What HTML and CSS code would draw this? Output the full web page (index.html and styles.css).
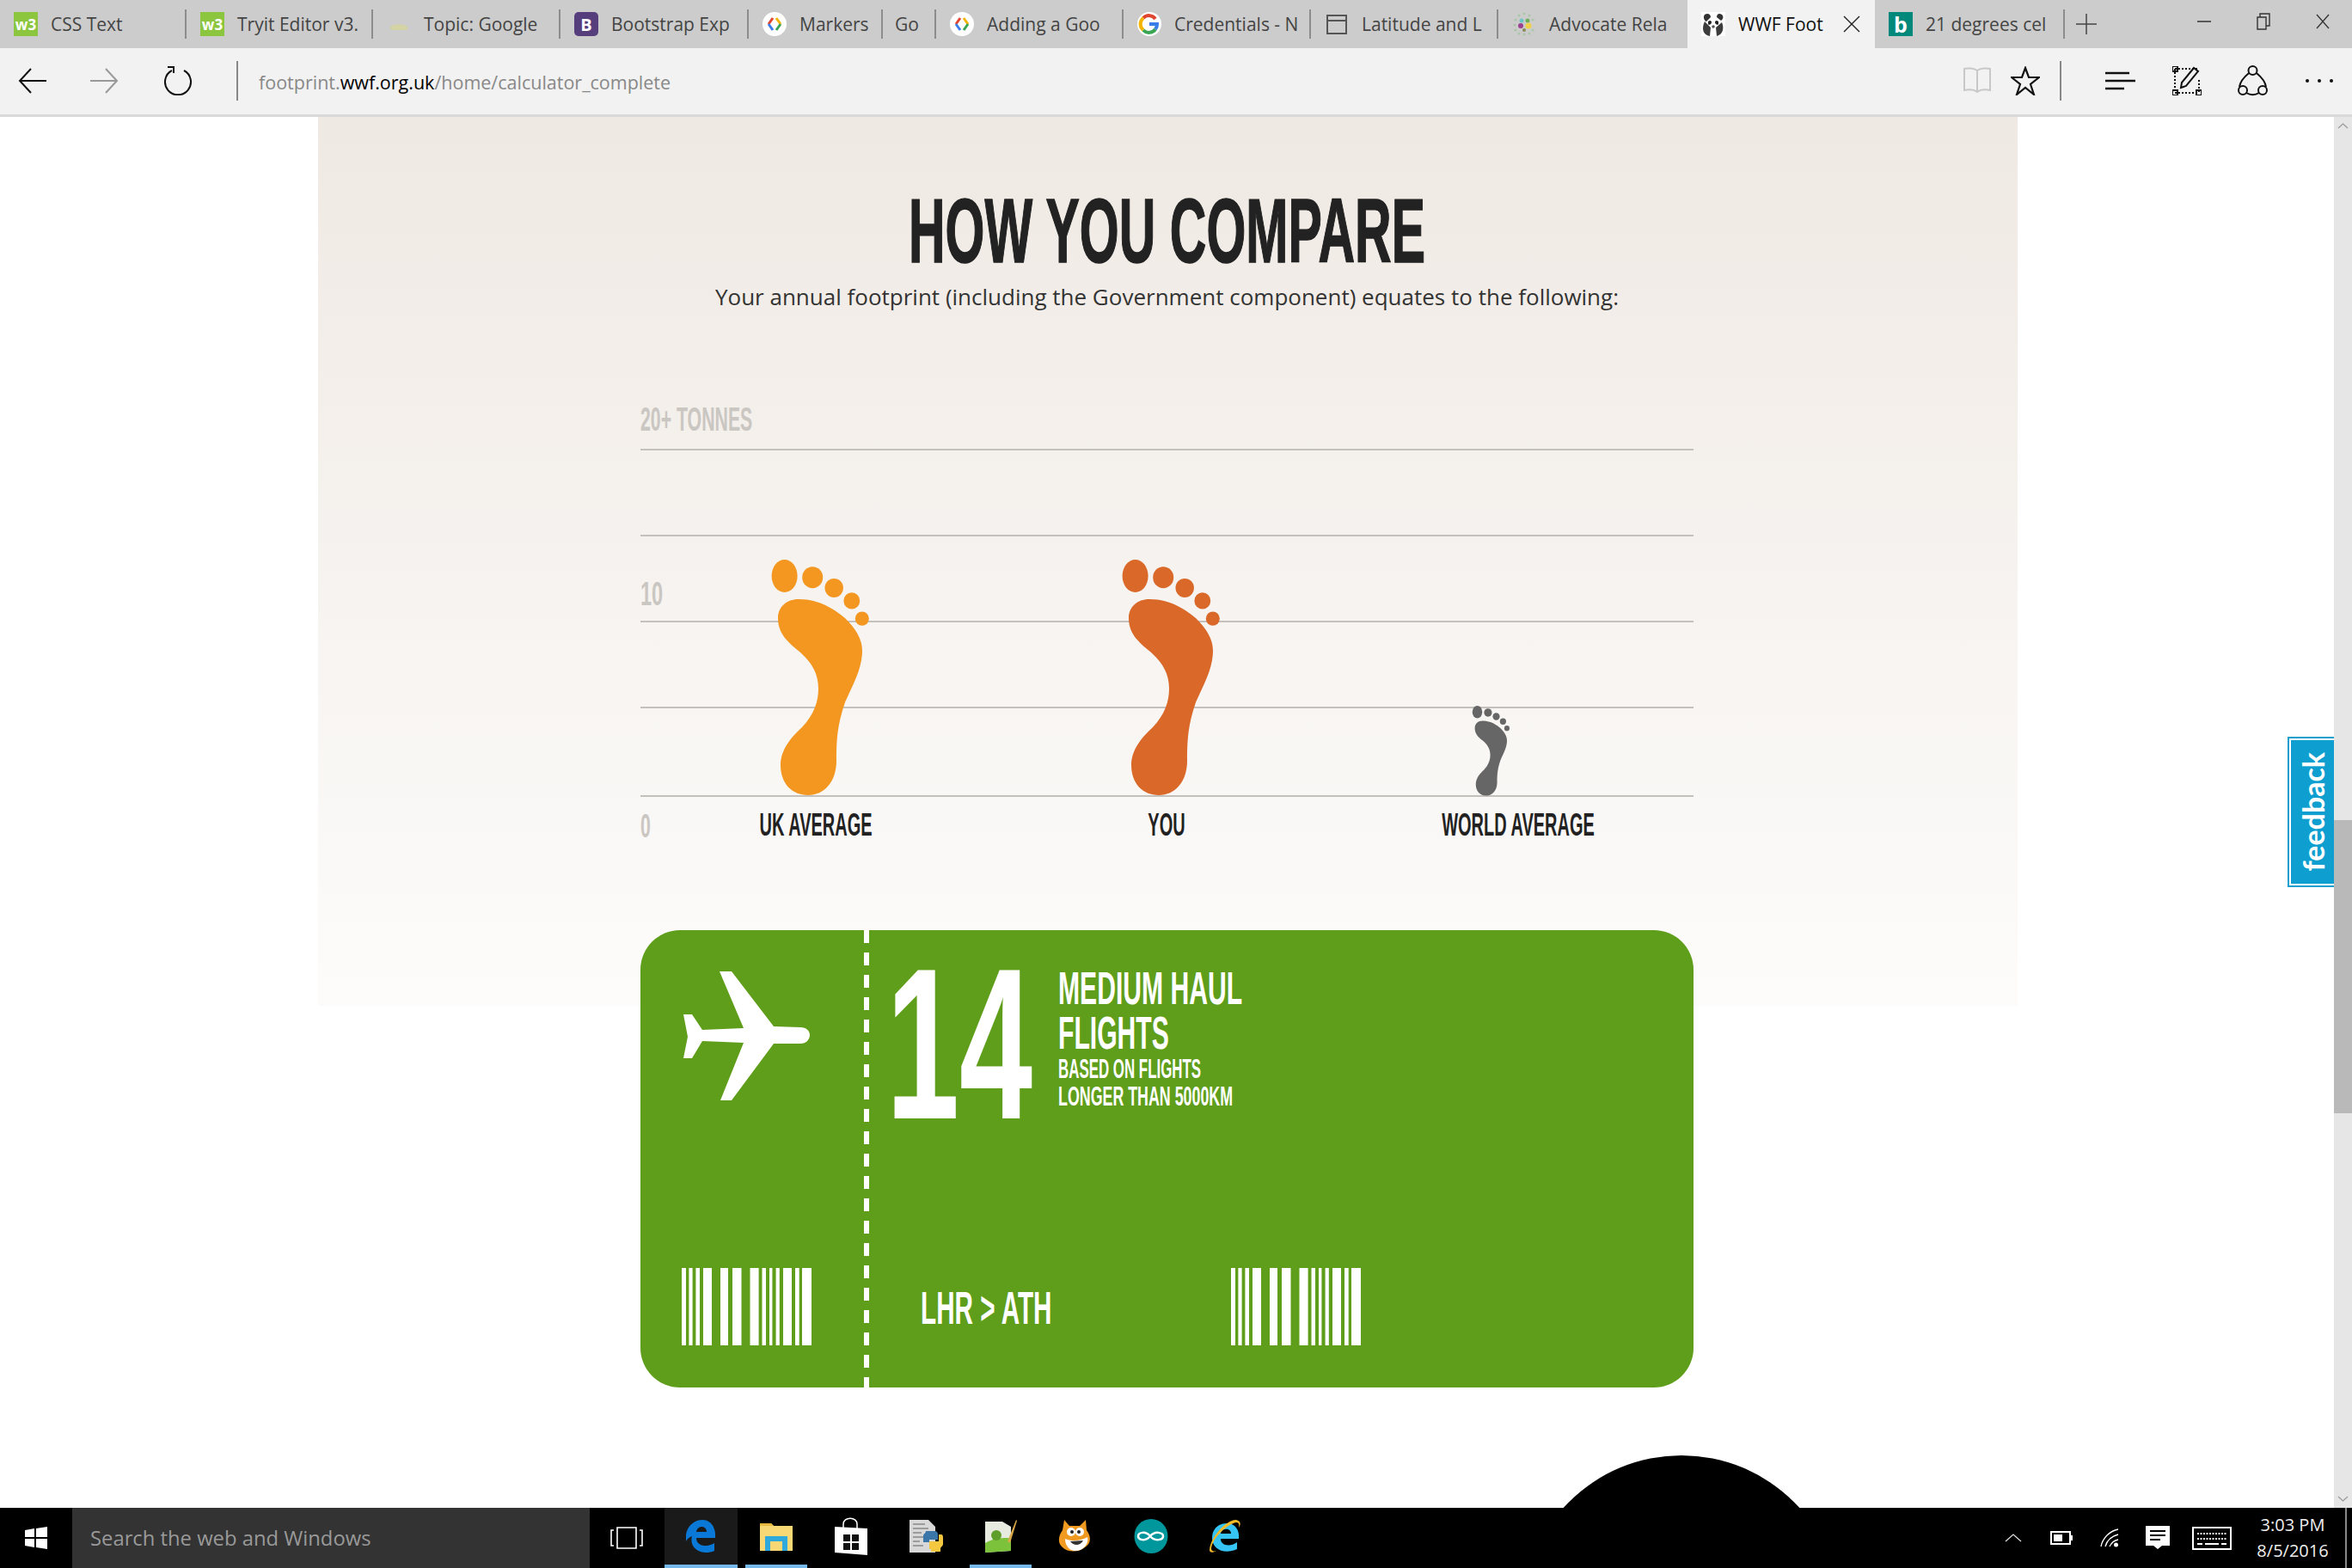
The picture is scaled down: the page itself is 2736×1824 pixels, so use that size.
FILE: index.html
```html
<!DOCTYPE html>
<html lang="en">
<head>
    <meta charset="UTF-8">
    <meta name="viewport" content="width=device-width, initial-scale=1.0">
    <title>WWF Footprint</title>
    <link rel="stylesheet" href="styles.css">
</head>
<body>

    <svg class="defs" width="0" height="0">
        <symbol id="foot" viewBox="0 0 115 275">
            <ellipse cx="15.6" cy="19" rx="15" ry="19"/>
            <ellipse cx="48.2" cy="20.7" rx="12" ry="12.5"/>
            <ellipse cx="73.2" cy="32.9" rx="10.7" ry="11"/>
            <ellipse cx="93.8" cy="47.9" rx="9.4" ry="9.6"/>
            <ellipse cx="105.8" cy="68.6" rx="8" ry="8.2"/>
            <path d="M32 46C58 46 76 60 86 68C98 80 106 92 106 106C106 125 97 142 86 166C78 190 76 205 76 234C76 258 62 274 43 274C24 274 11 260 11 239C11 220 25 205 36 195C50 180 55 165 55 150C55 130 45 118 33 107C18 95 8 85 8 68C8 55 18 46 32 46Z"/>
        </symbol>
        <symbol id="barcode" viewBox="0 0 151 90">
            <path d="M0 0h5v90H0zM8.400 0h4.200v90H8.400zM16.400 0h4.600v90h-4.600zM25 0h10v90H25zM45 0h9v90h-9zM59 0h10.500v90H59zM79.500 0h10.100v90H79.500zM93.500 0h4.500v90h-4.500zM102 0h3.400v90H102zM109.600 0h4.200v90h-4.200zM118 0h10v90h-10zM132 0h4.700v90H132zM140 0h11v90h-11z"/>
        </symbol>
        <symbol id="codeicon" viewBox="0 0 28 28">
            <circle cx="14" cy="14" r="14" fill="#fff"/>
            <path d="M12 7 7 14" stroke="#e0452f" stroke-width="3" fill="none"/>
            <path d="M7 14l5 7" stroke="#3a7de8" stroke-width="3" fill="none"/>
            <path d="M16 7l5 7" stroke="#f4b400" stroke-width="3" fill="none"/>
            <path d="M21 14l-5 7" stroke="#3aa655" stroke-width="3" fill="none"/>
        </symbol>
    </svg>

    <div class="tabs">
        <div class="tab tab-first"><span class="fav fav-w3">w3</span><span class="tab-title">CSS Text</span></div>
        <div class="tab tab-tryit"><span class="fav fav-w3">w3</span><span class="tab-title">Tryit Editor v3.</span></div>
        <div class="tab">
            <svg class="fav" viewBox="0 0 28 28"><path d="M3 18c4-5 18-5 22 0l-2 3H6z" fill="#d3d3a6"/></svg>
            <span class="tab-title">Topic: Google</span>
        </div>
        <div class="tab tab-wide"><span class="fav fav-bs">B</span><span class="tab-title">Bootstrap Exp</span></div>
        <div class="tab tab-markers">
            <svg class="fav"><use href="#codeicon"/></svg>
            <span class="tab-title">Markers</span>
        </div>
        <div class="tab tab-go"><span class="tab-title">Go</span></div>
        <div class="tab">
            <svg class="fav"><use href="#codeicon"/></svg>
            <span class="tab-title">Adding a Goo</span>
        </div>
        <div class="tab">
            <svg class="fav" viewBox="0 0 28 28">
                <circle cx="14" cy="14" r="14" fill="#fff"/>
                <path d="M21 8a9 9 0 0 0-14-1" stroke="#e0452f" stroke-width="4" fill="none"/>
                <path d="M7 7a9 9 0 0 0 0 14" stroke="#f4b400" stroke-width="4" fill="none"/>
                <path d="M7 21a9 9 0 0 0 14-1" stroke="#3aa655" stroke-width="4" fill="none"/>
                <path d="M21 20a9 9 0 0 0 2-6h-9" stroke="#3a7de8" stroke-width="4" fill="none"/>
            </svg>
            <span class="tab-title">Credentials - N</span>
        </div>
        <div class="tab">
            <svg class="fav" viewBox="0 0 28 28" fill="none" stroke="#555" stroke-width="2"><path d="M3 4h22v21H3zM3 10h22"/></svg>
            <span class="tab-title">Latitude and L</span>
        </div>
        <div class="tab tab-last">
            <svg class="fav" viewBox="0 0 28 28">
                <g fill="#a9c6a6"><circle cx="14" cy="2" r="1.500"/><circle cx="8" cy="4" r="1.500"/><circle cx="20" cy="4" r="1.500"/><circle cx="4" cy="9" r="1.500"/><circle cx="24" cy="9" r="1.500"/><circle cx="3" cy="15" r="1.500"/><circle cx="4" cy="21" r="1.500"/><circle cx="8" cy="25" r="1.500"/><circle cx="14" cy="26" r="1.500"/><circle cx="20" cy="25" r="1.500"/><circle cx="24" cy="21" r="1.500"/></g>
                <circle cx="11" cy="10" r="2.500" fill="#6ec3c4"/>
                <circle cx="18" cy="10" r="2.500" fill="#6fae5a"/>
                <circle cx="10" cy="16" r="3" fill="#9b3f8f"/>
                <circle cx="19" cy="16" r="3.500" fill="#efd04a"/>
                <circle cx="14" cy="21" r="2" fill="#8a8a5a"/>
            </svg>
            <span class="tab-title">Advocate Rela</span>
        </div>
        <div class="tab tab-active">
            <svg class="fav" viewBox="0 0 28 28">
                <rect width="28" height="28" fill="#fff"/>
                <path d="M4 3c3-2 7-1 7 3L6 11C3 10 2 5 4 3zM24 3c-3-2-6-1-6 3l5 4c3-2 3-5 1-7z" fill="#333"/>
                <path d="M4 11C0 19 2 27 10 28l1-10zM24 12c3 7 1 14-6 16l-1-10z" fill="#3d3d3d"/>
                <path d="M8 11c2-2 4-1 4 1s-3 4-4 2zM20 11c-2-2-4-1-4 1s3 4 4 2z" fill="#222"/>
                <circle cx="14" cy="17" r="1.800" fill="#555"/>
            </svg>
            <span class="tab-title">WWF Foot</span>
            <svg class="tab-close" viewBox="0 0 20 20" fill="none" stroke="#222" stroke-width="1.400"><path d="M1 1l18 18M19 1 1 19"/></svg>
        </div>
        <div class="tab tab-bing"><span class="fav fav-bing">b</span><span class="tab-title">21 degrees cel</span></div>
        <svg class="tab-plus" viewBox="0 0 24 24" fill="none" stroke="#444" stroke-width="1.500"><path d="M12 0v24M0 12h24"/></svg>
        <div class="winctl">
            <div class="winbtn"><svg width="16" height="2"><path d="M0 1h16" stroke="#333" stroke-width="1.500"/></svg></div>
            <div class="winbtn"><svg width="16" height="20" fill="none" stroke="#333" stroke-width="1.400"><path d="M1 5h10v14H1zM4 5V1h11v14h-4"/></svg></div>
            <div class="winbtn"><svg width="16" height="20" fill="none" stroke="#333" stroke-width="1.300"><path d="M1 2l14 16M15 2 1 18"/></svg></div>
        </div>
    </div>

    <div class="toolbar">
        <div class="tool tool-back">
            <svg width="34" height="30" viewBox="0 0 34 30" fill="none" stroke="#111" stroke-width="2"><path d="M33 15H2M15 1 2 15l13 14"/></svg>
        </div>
        <div class="tool">
            <svg width="34" height="30" viewBox="0 0 34 30" fill="none" stroke="#999" stroke-width="2"><path d="M1 15h31M19 1l13 14-13 14"/></svg>
        </div>
        <div class="tool">
            <svg width="34" height="34" viewBox="0 0 34 34" fill="none" stroke="#111" stroke-width="2"><path d="M10 5a15 15 0 1 0 14 0M5 1h7v7"/></svg>
        </div>
        <div class="tool-sep tool-sep-left"></div>
        <div class="url"><span class="url-dim">footprint.</span>wwf.org.uk<span class="url-dim">/home/calculator_complete</span></div>
        <div class="tools-right">
            <div class="tool-small">
                <svg width="34" height="32" viewBox="0 0 34 32" fill="none" stroke="#c8c8c8" stroke-width="2"><path d="M17 4C13 1 6 1 2 2v25c5-1 11-1 15 2 4-3 10-3 15-2V2c-4-1-11-1-15 2zM17 4v25"/></svg>
            </div>
            <div class="tool-small">
                <svg width="34" height="34" viewBox="0 0 34 34" fill="none" stroke="#111" stroke-width="2.200"><path d="M17 2l4 11h12l-10 8 4 12-10-8-10 8 4-12L1 13h12z"/></svg>
            </div>
            <div class="tool-sep tool-sep-right"></div>
            <div class="tool-wide">
                <svg width="35" height="22" viewBox="0 0 35 22" fill="none" stroke="#111" stroke-width="2.400"><path d="M0 2h28M0 11h35M0 20h22"/></svg>
            </div>
            <div class="tool-wide">
                <svg width="34" height="34" viewBox="0 0 34 34" fill="none" stroke="#111">
                    <path d="M3 3h28M3 31h28M3 3v28M31 16v15" stroke-width="2" stroke-dasharray="2 2"/>
                    <path d="M0 0h6v6H0zM0 28h6v6H0zM28 28h6v6h-6z" stroke-width="2"/>
                    <path d="M10 25l1-6L25 2l5 4-14 17z" stroke-width="2"/>
                </svg>
            </div>
            <div class="tool-wide">
                <svg width="35" height="36" viewBox="0 0 35 36" fill="none" stroke="#111" stroke-width="2"><circle cx="17.500" cy="6" r="5"/><circle cx="6" cy="29" r="5"/><circle cx="29" cy="29" r="5"/><path d="M13 9C7 14 3 19 2 25M22 9c6 5 10 10 11 16M10 32c5 3 10 3 15 0"/></svg>
            </div>
            <div class="tool-wide">
                <svg width="32" height="4" viewBox="0 0 32 4" fill="#111"><circle cx="2" cy="2" r="2"/><circle cx="16" cy="2" r="2"/><circle cx="30" cy="2" r="2"/></svg>
            </div>
        </div>
    </div>

    <div class="viewport">
        <div class="page">
            <div class="panel">
                <h1 class="title">HOW YOU COMPARE</h1>
                <p class="intro">Your annual footprint (including the Government component) equates to the following:</p>

                <div class="chart">
                    <div class="lines">
                        <div class="line line-top"><span class="ylabel">20+ TONNES</span></div>
                        <div class="line"></div>
                        <div class="line"><span class="ylabel ylabel-mid">10</span></div>
                        <div class="line"></div>
                        <div class="line line-base"></div>
                    </div>
                    <div class="feet">
                        <svg class="foot foot-uk"><use href="#foot"/></svg>
                        <svg class="foot foot-you"><use href="#foot"/></svg>
                        <svg class="foot foot-world"><use href="#foot"/></svg>
                    </div>
                </div>

                <div class="axis">
                    <span class="ylabel axis-zero">0</span>
                    <span class="xlabel">UK AVERAGE</span>
                    <span class="xlabel">YOU</span>
                    <span class="xlabel">WORLD AVERAGE</span>
                </div>

                <div class="ticket">
                    <div class="stub">
                        <svg class="plane" viewBox="0 0 150 152" fill="#fff"><path d="M44 1h14l49 64 31 1c7 0 11 4 11 9s-4 10-11 10h-31L58 151H45l27-67-48-2-12 20H2l5-25-5-26h10l12 18 48-2z"/></svg>
                        <svg class="barcode"><use href="#barcode"/></svg>
                    </div>
                    <div class="perforation"></div>
                    <div class="ticket-body">
                        <div class="ticket-top">
                            <div class="count">14</div>
                            <div class="count-text">
                                <div class="big-line">MEDIUM HAUL</div>
                                <div class="big-line">FLIGHTS</div>
                                <div class="small-line small-a">BASED ON FLIGHTS</div>
                                <div class="small-line small-b">LONGER THAN 5000KM</div>
                            </div>
                        </div>
                        <div class="ticket-bottom">
                            <div class="route">LHR &gt; ATH</div>
                            <svg class="barcode"><use href="#barcode"/></svg>
                        </div>
                    </div>
                </div>
            </div>
            <div class="blob"></div>
        </div>

        <div class="feedback"><span class="feedback-text">feedback</span></div>

        <div class="scrollbar">
            <div class="scroll-arrow"><svg width="13" height="7" fill="none" stroke="#999" stroke-width="1.200"><path d="M1 6l5.500-5L12 6"/></svg></div>
            <div class="scroll-track"><div class="scroll-thumb"></div></div>
            <div class="scroll-arrow"><svg width="13" height="7" fill="none" stroke="#999" stroke-width="1.200"><path d="M1 1l5.500 5L12 1"/></svg></div>
        </div>
    </div>

    <div class="taskbar">
        <div class="start">
            <svg width="26" height="26" viewBox="0 0 26 26" fill="#fff"><path d="M0 4l11-2v10H0zM13 2l13-2v12H13zM0 14h11v10L0 22zM13 14h13v12l-13-2z"/></svg>
        </div>
        <div class="search">Search the web and Windows</div>
        <div class="taskview">
            <svg width="38" height="26" viewBox="0 0 38 26" fill="none" stroke="#fff" stroke-width="1.600"><path d="M8 1h22v24H8zM4 4H1v18h3M34 4h3v18h-3"/></svg>
        </div>
        <div class="app app-edge app-on">
            <svg viewBox="0 0 40 40"><path fill="#0a78d7" fill-rule="evenodd" d="M3 19C4 8 13 1 22 1c10 0 16 9 15 21H15c0 9 11 12 21 6v9C22 43 6 35 10 20 8 21 5 22 3 26zM15 15h12c0-8-11-8-12 0z"/></svg>
        </div>
        <div class="app app-on">
            <svg viewBox="0 0 40 40">
                <path d="M1 5h13l3 3h22v29H1z" fill="#f8d775"/>
                <path d="M1 5h13l3 3H1z" fill="#e8b93f"/>
                <path d="M7 37V20h26v17h-6V26H13v11z" fill="#2fa8dc"/>
                <path d="M13 26h14v11H13z" fill="#f8d775"/>
            </svg>
        </div>
        <div class="app">
            <svg class="store" viewBox="0 0 40 44">
                <path d="M1 11l38 2v31L1 41z" fill="#fff"/>
                <path d="M11 14V8c0-9 16-9 16 0v7" fill="none" stroke="#fff" stroke-width="1.500"/>
                <path d="M11 20h8v8h-8zM21 20h8v8h-8zM11 30h8v8h-8zM21 30h8v8h-8z" fill="#111"/>
            </svg>
        </div>
        <div class="app">
            <svg viewBox="0 0 40 40">
                <path d="M1 1h22l8 8v30H1z" fill="#d8d8d8"/>
                <path d="M5 6h14M5 11h18M5 16h10M5 21h12M5 26h8M5 31h12" stroke="#888" stroke-width="1.500"/>
                <path d="M20 14h10c3 0 4 2 4 4v6H24v3h-7v-7c0-3 3-3 3-6z" fill="#3a76a8"/>
                <path d="M35 18h3c2 0 2 3 2 4v7c0 3-3 3-3 6v3H26v-3h-2v-9h11z" fill="#f4c93f"/>
            </svg>
        </div>
        <div class="app app-on">
            <svg viewBox="0 0 40 40">
                <path d="M2 3h20l10 6v28L2 39z" fill="#e6eadf"/>
                <path d="M2 28c10-6 20-6 30-6v15L2 39z" fill="#7cc23a"/>
                <circle cx="15" cy="19" r="6" fill="#5f9e2b"/>
                <path d="M28 26 38 1l1 1-8 26z" fill="#d8a94b"/>
            </svg>
        </div>
        <div class="app">
            <svg viewBox="0 0 40 40">
                <path d="M7 1l6 7h12l7-7 1 12c6 8 5 16-2 20-7 6-20 6-26 0C-1 28 0 20 5 13z" fill="#f09a22"/>
                <path d="M8 23c6 3 18 3 26-2 2 8-5 16-14 16-7 0-12-6-12-14z" fill="#fff"/>
                <circle cx="15" cy="15" r="5" fill="#fff"/>
                <circle cx="25" cy="15" r="5" fill="#fff"/>
                <circle cx="16" cy="15" r="2" fill="#222"/>
                <circle cx="24" cy="15" r="2" fill="#222"/>
                <path d="M14 26c4 6 12 5 15-1z" fill="#333"/>
            </svg>
        </div>
        <div class="app">
            <svg viewBox="0 0 40 40">
                <ellipse cx="20" cy="20" rx="19.500" ry="20" fill="#00979c"/>
                <path d="M19 20c-6-7-14-4-14 0s8 7 14 0c6-7 15-4 15 0s-9 7-15 0z" fill="none" stroke="#fff" stroke-width="2.500"/>
            </svg>
        </div>
        <div class="app">
            <svg viewBox="0 0 40 40">
                <path fill="#35c4f3" fill-rule="evenodd" d="M4 22C4 11 12 5 21 5c10 0 15 8 14 18H14c0 8 11 10 19 4v8c-15 7-29 0-29-13zM14 17h12c0-7-11-7-12 0z"/>
                <path d="M32 1C22 0 2 20 1 36c0 3 3 4 8 1C5 38 3 37 3 34 5 20 24 5 32 4c3 0 4 2 3 6 3-4 2-8-3-9z" fill="#f0b92a"/>
            </svg>
        </div>
        <div class="tray">
            <div class="tray-icon tray-chevron">
                <svg width="20" height="10" fill="none" stroke="#ddd" stroke-width="1.300"><path d="M1 9l9-8 9 8"/></svg>
            </div>
            <div class="tray-icon tray-battery">
                <svg width="27" height="16" fill="none" stroke="#fff" stroke-width="2"><path d="M1 1h22v14H1z"/><path d="M4 4h10v8H4z" fill="#fff" stroke="none"/><path d="M25 5v6"/></svg>
            </div>
            <div class="tray-icon tray-wifi">
                <svg width="24" height="22" viewBox="0 0 24 22" fill="none" stroke="#fff" stroke-width="1.300"><path d="M1 21C3 11 11 3 21 1M6 21c2-7 7-12 15-14M11 21c2-4 5-7 10-8"/><circle cx="18.500" cy="19" r="2.500" fill="#fff" stroke="none"/></svg>
            </div>
            <div class="tray-icon tray-msg">
                <svg width="28" height="28" viewBox="0 0 28 28"><path d="M0 0h28v23H19l-5 4-5-4H0z" fill="#fff"/><path d="M5 6h18M5 11h18M5 16h12" stroke="#000" stroke-width="1.800"/></svg>
            </div>
            <div class="tray-icon tray-kbd">
                <svg width="46" height="27" viewBox="0 0 46 27" fill="none" stroke="#fff"><rect x="1" y="1" width="44" height="25" stroke-width="2"/><path d="M6 8h34M6 14h34" stroke-width="2" stroke-dasharray="2 1.500"/><path d="M6 20h6M15 20h16M34 20h6" stroke-width="2"/></svg>
            </div>
            <div class="clock">
                <div>3:03 PM</div>
                <div>8/5/2016</div>
            </div>
            <div class="show-desktop"></div>
        </div>
    </div>

</body>
</html>
```

FILE: styles.css
```css
* {
    box-sizing: border-box;
}

html, body {
    margin: 0;
    height: 100%;
}

body {
    width: 2736px;
    height: 1824px;
    display: flex;
    flex-direction: column;
    overflow: hidden;
    background: #fff;
    font-family: "Open Sans", "Liberation Sans", sans-serif;
}

.defs {
    display: block;
    height: 0;
}

/* tab strip */
.tabs {
    height: 56px;
    flex: none;
    display: flex;
    align-items: stretch;
    background: #ccc;
    color: #444;
    font-size: 21px;
}

.tab {
    width: 218px;
    flex: none;
    display: flex;
    align-items: center;
    padding-left: 16px;
}

.tab::after {
    content: "";
    width: 2px;
    height: 34px;
    flex: none;
    background: #8c8c8c;
}

.tab-first { width: 217px; }
.tab-tryit { width: 217px; }
.tab-wide { width: 219px; }
.tab-markers { width: 156px; }
.tab-go { width: 62px; padding-left: 14px; }
.tab-last { width: 220px; }
.tab-last::after { display: none; }

.tab-active {
    background: #f2f2f2;
    color: #111;
}

.tab-active::after { display: none; }

.tab-bing { width: 221px; }

.tab-title {
    flex: 1;
    min-width: 0;
    white-space: nowrap;
}

.tab-active .tab-title {
    flex: none;
    width: 104px;
}

.tab-close {
    width: 20px;
    height: 20px;
    flex: none;
    margin-left: 18px;
}

.fav {
    width: 28px;
    height: 28px;
    flex: none;
    margin-right: 15px;
    display: flex;
    align-items: center;
    justify-content: center;
}

.fav-w3 {
    background: #8cc63f;
    color: #fff;
    font-size: 17px;
    font-weight: 700;
}

.fav-bs {
    background: #563d7c;
    border-radius: 5px;
    color: #fff;
    font-size: 20px;
    font-weight: 700;
}

.fav-bing {
    background: #00897b;
    color: #fff;
    font-size: 25px;
    font-weight: 700;
}

.tab-plus {
    width: 24px;
    height: 24px;
    flex: none;
    align-self: center;
    margin-left: 13px;
}

.winctl {
    margin-left: auto;
    display: flex;
}

.winbtn {
    width: 69px;
    display: flex;
    align-items: center;
    justify-content: center;
    padding-bottom: 6px;
}

/* address bar */
.toolbar {
    height: 80px;
    flex: none;
    display: flex;
    align-items: center;
    padding-bottom: 2px;
    background: #f2f2f2;
    border-bottom: 3px solid #d9d9d9;
}

.tool {
    width: 86px;
    display: flex;
    justify-content: center;
}

.tool-back {
    width: 80px;
    margin-left: -2px;
}

.tool-sep {
    width: 2px;
    height: 46px;
    background: #888;
}

.tool-sep-left { margin-left: 25px; }
.tool-sep-right { margin: 0 30px 0 12px; }

.url {
    margin: 4px 0 0 24px;
    font-size: 21.500px;
    color: #000;
    white-space: nowrap;
}

.url-dim {
    color: #888;
}

.tools-right {
    margin-left: auto;
    display: flex;
    align-items: center;
}

.tool-small {
    width: 56px;
    display: flex;
    justify-content: center;
}

.tool-wide {
    width: 77px;
    display: flex;
    justify-content: center;
}

/* page area */
.viewport {
    flex: 1;
    min-height: 0;
    display: flex;
    position: relative;
}

.page {
    flex: 1;
    min-width: 0;
    overflow: hidden;
}

.panel {
    width: 1977px;
    height: 1034px;
    margin-left: 370px;
    padding: 80px 0 0 375px;
    background: linear-gradient(#efe9e3, #fdfcfb);
}

.panel > * {
    width: 1225px;
}

.title {
    margin: 0;
    text-align: center;
    font-family: "Liberation Sans", sans-serif;
    font-size: 105px;
    line-height: 106px;
    font-weight: 700;
    color: #222;
    white-space: nowrap;
    -webkit-text-stroke: 1.500px #222;
    transform: scaleX(.562);
}

.intro {
    margin: 3px 0 0;
    text-align: center;
    font-size: 26px;
    line-height: 40px;
    color: #333;
    white-space: nowrap;
}

.chart {
    margin-top: 59px;
    display: grid;
}

.lines, .feet {
    grid-area: 1 / 1;
}

.line {
    height: 100px;
    display: flex;
    align-items: flex-end;
    padding-bottom: 15px;
    border-bottom: 2px solid #c4c0bb;
}

.line-base {
    height: 103px;
}

.ylabel {
    font-family: "Liberation Sans", sans-serif;
    font-size: 38px;
    line-height: 38px;
    font-weight: 700;
    color: #cac6c2;
    white-space: nowrap;
    transform: scaleX(.56);
    transform-origin: left;
}

.ylabel-mid {
    margin-bottom: -3px;
    transform: scaleX(.62);
}

.feet {
    display: grid;
    grid-template-columns: repeat(3, 1fr);
    align-items: end;
    justify-items: center;
    padding-bottom: 1px;
}

.foot {
    display: block;
    width: 115px;
    height: 275px;
}

.foot-uk {
    fill: #f39721;
    margin-left: 10px;
}

.foot-you {
    fill: #d96829;
    margin-left: 10px;
}

.foot-world {
    width: 45px;
    height: 105px;
    fill: #666;
    margin-right: 62px;
}

.axis {
    margin-top: 15px;
    height: 38px;
    display: grid;
    grid-template-columns: repeat(3, 1fr);
    justify-items: center;
}

.axis-zero {
    grid-area: 1 / 1;
    justify-self: start;
}

.xlabel {
    font-family: "Liberation Sans", sans-serif;
    font-size: 36px;
    line-height: 36px;
    font-weight: 700;
    color: #222;
    white-space: nowrap;
    transform: scaleX(.555);
}

.axis-zero + .xlabel {
    grid-area: 1 / 1;
}

.ticket {
    height: 532px;
    margin-top: 102px;
    display: flex;
    position: relative;
    background: #5f9e1a;
    border-radius: 46px;
    color: #fff;
    font-family: "Liberation Sans", sans-serif;
    font-weight: 700;
}

.stub {
    width: 260px;
    flex: none;
    display: flex;
    flex-direction: column;
    justify-content: space-between;
    padding: 47px 0 49px 48px;
}

.plane {
    display: block;
    width: 150px;
    height: 152px;
}

.barcode {
    display: block;
    width: 151px;
    height: 90px;
    flex: none;
    fill: #fff;
}

.perforation {
    width: 6px;
    flex: none;
    background: repeating-linear-gradient(#fff 0, #fff 15px, transparent 15px, transparent 26px);
}

.ticket-body {
    flex: 1;
    display: flex;
    flex-direction: column;
    justify-content: space-between;
    padding: 8px 0 49px 20px;
}

.ticket-top {
    display: flex;
}

.count {
    width: 200px;
    flex: none;
    font-size: 250px;
    line-height: 250px;
    white-space: nowrap;
    transform: scaleX(.611);
    transform-origin: left;
}

.count-text {
    margin-top: 34px;
}

.big-line {
    font-size: 53px;
    line-height: 52px;
    white-space: nowrap;
    transform: scaleX(.568);
    transform-origin: left;
}

.small-line {
    font-size: 31px;
    line-height: 32px;
    white-space: nowrap;
    transform-origin: left;
}

.small-a { transform: scaleX(.545); }
.small-b { transform: scaleX(.575); }

.ticket-bottom {
    display: flex;
    align-items: center;
    padding-left: 40px;
}

.route {
    width: 361px;
    flex: none;
    margin-top: 3px;
    font-size: 53px;
    line-height: 53px;
    white-space: nowrap;
    transform: scaleX(.56);
    transform-origin: left;
}

.blob {
    width: 370px;
    height: 370px;
    margin: 523px 0 0 1771px;
    border-radius: 50%;
    background: #000;
}

.feedback {
    position: absolute;
    top: 721px;
    right: 21px;
    width: 54px;
    height: 175px;
    display: flex;
    align-items: center;
    justify-content: center;
    padding-left: 4px;
    background: #0e9fd0;
    border: 2px solid #1a9fcf;
    border-right: 0;
    box-shadow: inset 2px 0 #fff, inset 0 2px #fff, inset 0 -2px #fff;
    color: #fff;
}

.feedback-text {
    writing-mode: vertical-rl;
    transform: rotate(180deg);
    font-family: Lato, "Open Sans", sans-serif;
    font-size: 34px;
    font-weight: 700;
    line-height: 34px;
}

.scrollbar {
    width: 21px;
    flex: none;
    display: flex;
    flex-direction: column;
    background: #e6e6e6;
}

.scroll-arrow {
    height: 21px;
    flex: none;
    display: flex;
    align-items: center;
    justify-content: center;
}

.scroll-track {
    flex: 1;
    padding-top: 797px;
}

.scroll-thumb {
    height: 341px;
    background: #b9b9b9;
}

/* windows taskbar */
.taskbar {
    height: 70px;
    flex: none;
    display: flex;
    background: #000;
}

.start {
    width: 84px;
    flex: none;
    display: flex;
    align-items: center;
    justify-content: center;
}

.search {
    width: 602px;
    flex: none;
    display: flex;
    align-items: center;
    padding-left: 21px;
    background: #333;
    color: #999;
    font-size: 23.800px;
    white-space: nowrap;
}

.taskview {
    width: 85px;
    flex: none;
    display: flex;
    align-items: center;
    justify-content: center;
}

.app {
    width: 72px;
    flex: none;
    margin: 0 7.600px;
    display: flex;
    align-items: center;
    justify-content: center;
    border-bottom: 4px solid transparent;
}

.app svg {
    width: 40px;
    height: 40px;
}

.app svg.store {
    height: 44px;
}

.app-edge {
    width: 85px;
    margin: 0 1.500px;
    background: #1a1a1a;
}

.app-on {
    border-bottom-color: #76b9ed;
}

.tray {
    margin-left: auto;
    display: flex;
    align-items: center;
    color: #eee;
}

.tray-icon {
    display: flex;
    justify-content: center;
}

.tray-chevron, .tray-battery { width: 56px; }
.tray-wifi { width: 58px; }
.tray-msg { width: 52px; }
.tray-kbd { width: 74px; }

.clock {
    width: 114px;
    text-align: center;
    font-size: 20px;
    line-height: 30px;
}

.show-desktop {
    width: 2px;
    height: 70px;
    margin: 0 6px 0 4px;
    background: #888;
}
```
